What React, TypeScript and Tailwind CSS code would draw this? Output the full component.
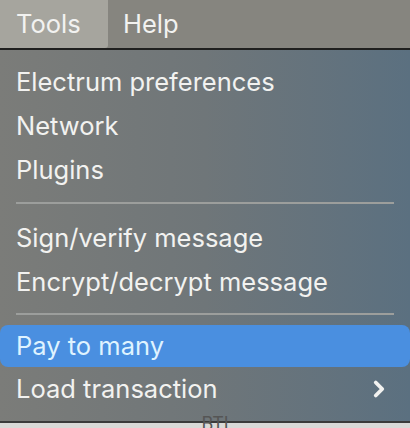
import { ChevronRight } from "lucide-react";

const groups = [
  ["Electrum preferences", "Network", "Plugins"],
  ["Sign/verify message", "Encrypt/decrypt message"],
];

export default function App() {
  return (
    <div
      className="relative h-[428px] w-[410px] overflow-hidden bg-[#d9d9d7] text-[#f2f2f0]"
      style={{ fontFamily: "Inter, 'Noto Sans', sans-serif" }}
    >
      {/* Menu bar */}
      <div className="flex h-[48px] items-stretch bg-[#86857f]">
        <div className="flex w-[108px] items-center rounded-br-[3px] bg-[#a6a59e] pl-[16px] text-[25.5px]">
          Tools
        </div>
        <div className="flex items-center pl-[15px] text-[25.5px]">Help</div>
      </div>
      <div className="h-[2px] bg-[#20201f]" />

      {/* Dropdown */}
      <div className="flex h-[371px] flex-col bg-gradient-to-r from-[#7b7c79] via-[#6f7679] to-[#5b7080] pt-[10px]">
        {groups.map((items, gi) => (
          <div key={gi}>
            {items.map((label) => (
              <div key={label} className="flex h-[44px] items-center px-[16px] text-[25.5px] leading-none">
                {label}
              </div>
            ))}
            <div
              className={
                gi === 0
                  ? "mx-[16px] mb-[12px] mt-[10px] h-[2px] bg-[#9c9e9c]"
                  : "mx-[16px] mb-[10px] mt-[9px] h-[2px] bg-[#9c9e9c]"
              }
            />
          </div>
        ))}
        <div className="flex h-[42px] items-center rounded-[8px] bg-[#4a8fe0] px-[16px] text-[25.5px] leading-none text-[#dff3ff]">
          Pay to many
        </div>
        <div className="flex h-[44px] items-center justify-between pl-[16px] pr-[18px] text-[25.5px] leading-none">
          <span>Load transaction</span>
          <ChevronRight size={26} strokeWidth={3.5} />
        </div>
      </div>
      <div className="h-[2px] bg-[#3a3a3a]" />
      <div className="flex justify-center pl-[20px] text-[18px] leading-none text-[#555]">
        <span className="-mt-[8px]">BTI</span>
      </div>
    </div>
  );
}
